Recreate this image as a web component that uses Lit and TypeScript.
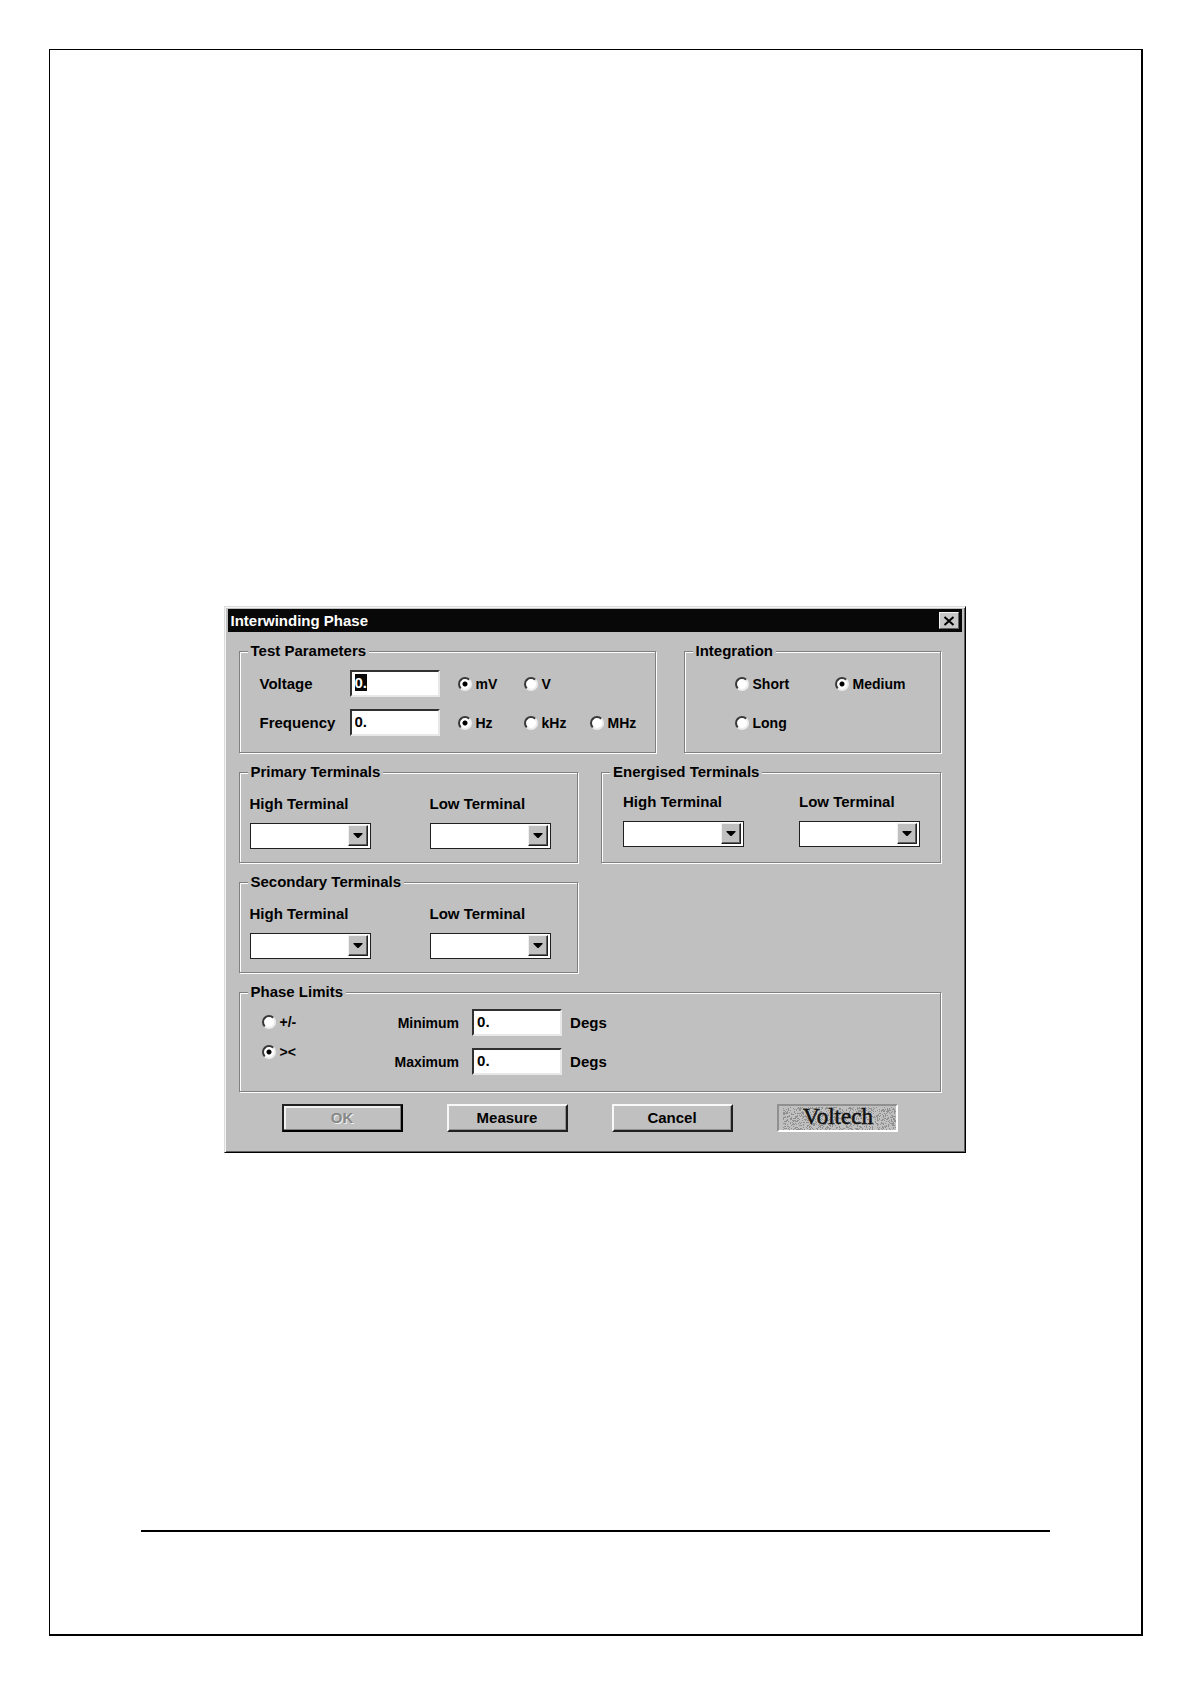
import { LitElement, html, css, svg } from "lit";
import { customElement, property } from "lit/decorators.js";

const face = css`
  :host {
    font-family: "Liberation Sans", Arial, sans-serif;
    font-size: 15px;
    font-weight: 700;
    line-height: 18px;
    color: #000;
  }
  * {
    box-sizing: border-box;
  }
`;

/* Etched frame with a caption set into its top edge. */
@customElement("group-box")
class GroupBox extends LitElement {
  @property() caption = "";

  static styles = [
    face,
    css`
      :host {
        display: grid;
      }
      .box {
        margin: 0;
        min-width: 0;
        padding: 0;
        border: 1px solid #808080;
        box-shadow: 1px 1px 0 #fff, inset 1px 1px 0 #fff;
      }
      .caption {
        margin-left: 8px;
        padding: 0 3px;
        background: #c0c0c0;
      }
    `,
  ];

  render() {
    return html`<fieldset class="box">
      <legend class="caption">${this.caption}</legend>
      <slot></slot>
    </fieldset>`;
  }
}

/* Captioned drop-down list with a raised arrow button. */
@customElement("terminal-select")
class TerminalSelect extends LitElement {
  @property() label = "";

  static styles = [
    face,
    css`
      .field {
        display: grid;
        gap: 10px;
        width: 121px;
      }
      .label {
        white-space: nowrap;
      }
      .frame {
        display: grid;
        grid-template-columns: 1fr 20px;
        height: 26px;
        padding: 1px 2px 2px 1px;
        border: 1px solid #202020;
        background: #fff;
      }
      .list {
        grid-area: 1 / 1 / 2 / 3;
        appearance: none;
        width: 100%;
        padding: 0 22px 0 3px;
        border: 0;
        outline: 0;
        background: #fff;
        font: inherit;
      }
      .arrow {
        grid-area: 1 / 2 / 2 / 3;
        z-index: 1;
        display: grid;
        place-items: center;
        border: 1px solid;
        border-color: #f0f0f0 #202020 #202020 #f0f0f0;
        box-shadow: inset -1px -1px 0 #606060;
        background: #c0c0c0;
        pointer-events: none;
      }
    `,
  ];

  render() {
    return html`<div class="field">
      <label class="label" for="list">${this.label}</label>
      <div class="frame">
        <select class="list" id="list">
          <option value=""></option>
        </select>
        <span class="arrow">
          <svg width="10" height="6" viewBox="0 0 10 6" aria-hidden="true">
            <path d="M0.5 0H9.5V1L5.5 5H4.5L0.5 1Z" fill="#000" />
          </svg>
        </span>
      </div>
    </div>`;
  }
}

/* Speckle for the logo plate, from a small fixed-seed generator. */
function speckle(columns: number, rows: number) {
  let seed = 77;
  let d = "";
  for (let y = 0; y < rows; y++) {
    for (let x = 0; x < columns; x++) {
      seed = (seed * 1103515245 + 12345) % 2147483648;
      if (seed / 2147483648 < 0.34) d += `M${x} ${y}h1v1h-1z`;
    }
  }
  return d;
}
const speckles = speckle(113, 23);

@customElement("app-root")
class AppRoot extends LitElement {
  static styles = [
    face,
    css`
      :host {
        display: block;
        background: #fff;
      }
      .page {
        display: flex;
        min-height: 100vh;
        padding: 49px 48px 48px 49px;
      }
      .sheet {
        flex: 1;
        display: flex;
        flex-direction: column;
        align-items: center;
        padding: 556px 25px 102px 23px;
        border: 1px solid #000;
        border-right-width: 2px;
        border-bottom-width: 2px;
      }
      .rule {
        align-self: stretch;
        height: 0;
        margin: auto 66px 0 68px;
        border: 0;
        border-top: 2px solid #000;
      }
      .dialog {
        width: 100%;
        max-width: 742px;
        padding: 2px 3px;
        border: 1px solid;
        border-color: #dcdcdc #000 #000 #dcdcdc;
        box-shadow: inset 1px 1px 0 #f4f4f4, inset -1px -1px 0 #606060;
        background: #c0c0c0;
      }
      .title-bar {
        display: flex;
        align-items: center;
        justify-content: space-between;
        height: 23px;
        padding: 0 3px;
        background: #080808;
        color: #fff;
      }
      .title {
        margin: 0;
        font-size: inherit;
        font-weight: inherit;
      }
      .close {
        display: grid;
        place-items: center;
        width: 20px;
        height: 17px;
        padding: 0;
        border: 1px solid;
        border-color: #f4f4f4 #606060 #606060 #f4f4f4;
        background: #c8c8c8;
      }
      .body {
        display: grid;
        gap: 10px;
        padding: 10px 21px 18px 11px;
      }
      .settings {
        display: grid;
        grid-template-columns: 417fr 257fr;
        gap: 28px;
      }
      .terminals {
        display: grid;
        grid-template-columns: 1fr 1fr;
        gap: 10px 23px;
      }
      .parameters {
        display: grid;
        grid-template-columns: 90px 90px 18px 66px 66px auto;
        grid-auto-rows: 27px;
        row-gap: 12px;
        align-items: center;
        padding: 10px 0 16px 20px;
      }
      .quantity {
        grid-column: 1;
      }
      .first-unit {
        grid-column: 4;
      }
      .integration {
        display: grid;
        grid-template-columns: 100px auto;
        grid-auto-rows: 27px;
        row-gap: 12px;
        align-items: center;
        padding: 10px 0 16px 50px;
      }
      .pair {
        display: flex;
        gap: 59px;
        padding: 14px 10px 13px;
      }
      .pair.energised {
        gap: 55px;
        padding: 12px 20px 13px 21px;
      }
      .limits {
        display: flex;
        padding: 8px 0 16px 22px;
      }
      .signs {
        display: grid;
        align-content: start;
        gap: 12px;
        width: 133px;
        padding-top: 4px;
      }
      .bounds {
        display: grid;
        grid-template-columns: max-content 90px auto;
        grid-auto-rows: 27px;
        gap: 12px 8px;
        align-items: center;
      }
      .bound {
        padding-right: 5px;
        font-size: 14px;
        text-align: right;
      }
      .text {
        width: 90px;
        height: 27px;
        padding: 0 3px 3px;
        border: 2px solid;
        border-color: #303030 #e8e8e8 #e8e8e8 #303030;
        border-radius: 0;
        outline: 0;
        background: #fff;
        font: inherit;
      }
      .text::selection {
        background: #080808;
        color: #fff;
      }
      .choice {
        display: flex;
        align-items: center;
        gap: 4px;
        font-size: 14px;
      }
      .radio {
        appearance: none;
        flex: none;
        width: 14px;
        height: 14px;
        margin: 0;
        border: 2px solid;
        border-color: #383838 #ececec #ececec #383838;
        border-radius: 50%;
        outline: 0;
        background: #fff;
      }
      .radio:checked {
        background: radial-gradient(circle, #000 2px, #fff 3px);
      }
      .actions {
        display: flex;
        gap: 44px;
        padding: 2px 0 0 43px;
      }
      .button {
        width: 121px;
        height: 28px;
        padding: 0;
        border: 2px solid;
        border-color: #f8f8f8 #202020 #202020 #f8f8f8;
        box-shadow: inset -1px -1px 0 #909090;
        background: #c0c0c0;
        color: #000;
        font: inherit;
      }
      .button:disabled {
        border-color: #202020 #000 #000 #202020;
        box-shadow: inset -1px -1px 0 #808080, inset 2px 2px 0 #f0f0f0;
        color: #888;
        text-shadow: 1px 1px 0 #f0f0f0;
      }
      .logo {
        display: block;
        width: 121px;
        height: 28px;
        border: 2px solid;
        border-color: #909090 #fff #fff #909090;
        background: #c0c0c0;
      }
      .logo-text {
        font: 400 23px "Liberation Serif", "Times New Roman", serif;
        stroke: #101010;
        stroke-width: 0.5px;
      }
    `,
  ];

  firstUpdated() {
    requestAnimationFrame(() => {
      const voltage = this.renderRoot.querySelector<HTMLInputElement>(".voltage");
      voltage?.focus({ preventScroll: true });
      voltage?.select();
    });
  }

  radio(group: string, id: string, label: string, checked = false, place = "") {
    return html`<label class="choice ${place}" for=${id}>
      <input class="radio" type="radio" name=${group} id=${id} ?checked=${checked} />${label}
    </label>`;
  }

  render() {
    return html`<div class="page">
      <main class="sheet">
        <section class="dialog" role="dialog" aria-labelledby="title">
          <header class="title-bar">
            <h1 class="title" id="title">Interwinding Phase</h1>
            <button class="close" type="button" aria-label="Close">
              <svg width="12" height="10" viewBox="0 0 12 10" aria-hidden="true">
                <path d="M1.5 1L10.5 9M10.5 1L1.5 9" stroke="#000" stroke-width="2" />
              </svg>
            </button>
          </header>
          <form class="body">
            <div class="settings">
              <group-box caption="Test Parameters">
                <div class="parameters">
                  <label class="quantity" for="voltage">Voltage</label>
                  <input class="text voltage" id="voltage" value="0." />
                  ${this.radio("volts", "mv", "mV", true, "first-unit")}
                  ${this.radio("volts", "v", "V")}
                  <label class="quantity" for="frequency">Frequency</label>
                  <input class="text" id="frequency" value="0." />
                  ${this.radio("hertz", "hz", "Hz", true, "first-unit")}
                  ${this.radio("hertz", "khz", "kHz")}
                  ${this.radio("hertz", "mhz", "MHz")}
                </div>
              </group-box>
              <group-box caption="Integration">
                <div class="integration">
                  ${this.radio("integration", "short", "Short")}
                  ${this.radio("integration", "medium", "Medium", true)}
                  ${this.radio("integration", "long", "Long")}
                </div>
              </group-box>
            </div>
            <div class="terminals">
              <group-box caption="Primary Terminals">
                <div class="pair">
                  <terminal-select label="High Terminal"></terminal-select>
                  <terminal-select label="Low Terminal"></terminal-select>
                </div>
              </group-box>
              <group-box caption="Energised Terminals">
                <div class="pair energised">
                  <terminal-select label="High Terminal"></terminal-select>
                  <terminal-select label="Low Terminal"></terminal-select>
                </div>
              </group-box>
              <group-box caption="Secondary Terminals">
                <div class="pair">
                  <terminal-select label="High Terminal"></terminal-select>
                  <terminal-select label="Low Terminal"></terminal-select>
                </div>
              </group-box>
            </div>
            <group-box caption="Phase Limits">
              <div class="limits">
                <div class="signs">
                  ${this.radio("limits", "plus-minus", "+/-")}
                  ${this.radio("limits", "range", "><", true)}
                </div>
                <div class="bounds">
                  <label class="bound" for="minimum">Minimum</label>
                  <input class="text" id="minimum" value="0." />
                  <span>Degs</span>
                  <label class="bound" for="maximum">Maximum</label>
                  <input class="text" id="maximum" value="0." />
                  <span>Degs</span>
                </div>
              </div>
            </group-box>
            <div class="actions">
              <button class="button" type="button" disabled>OK</button>
              <button class="button" type="button">Measure</button>
              <button class="button" type="button">Cancel</button>
              <svg class="logo" viewBox="0 0 117 24" role="img" aria-label="Voltech">
                ${svg`<path d=${speckles} transform="translate(4 1)" fill="#909090" />`}
                <text class="logo-text" x="59" y="18" text-anchor="middle" fill="#101010">Voltech</text>
              </svg>
            </div>
          </form>
        </section>
        <hr class="rule" />
      </main>
    </div>`;
  }
}
